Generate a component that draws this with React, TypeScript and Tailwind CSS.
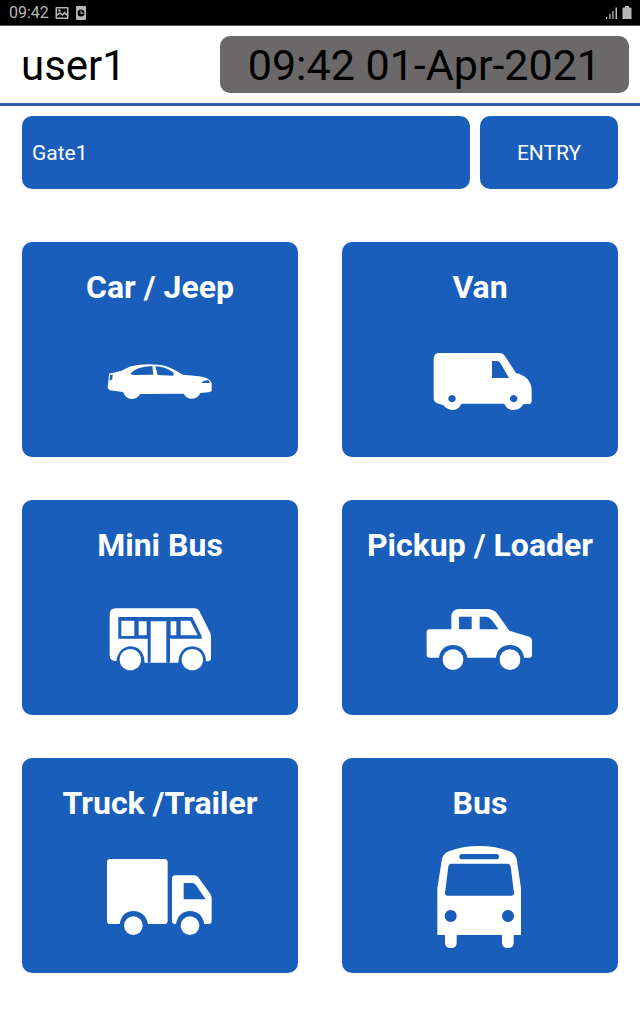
import { useState } from 'react'
import type { ReactNode } from 'react'

interface Vehicle {
  name: string
  viewBox: string
  icon: ReactNode
}

const GATES = ['Gate1', 'Gate2', 'Gate3']

const vehicles: Vehicle[] = [
  {
    name: 'Car / Jeep',
    viewBox: '33 -69 324 324',
    icon: (
      <path
        fillRule="evenodd"
        d="M40 95 L42 73 Q44 69 52 69 L80 62 Q105 46 135 44 Q185 41 212 48 Q228 53 264 74 Q300 76 324 81 Q346 86 350 100 V122 Q348 126 340 127 L316 129 Q309 146 291 146 Q274 146 266 131 L136 132 Q127 147 109 147 Q92 146 84 126 L45 121 Q38 118 38 110Z M107 70 Q122 50 172 48 L175 74 L115 75 Q108 75 107 70Z M181 49 Q212 50 236 68 L235 77 L188 75Z M319 99 Q326 89 341 91 L345 99Z M44 92 L45 76 L53 73 L52 88Z"
      />
    ),
  },
  {
    name: 'Van',
    viewBox: '18 -39 324 324',
    icon: (
      <path
        fillRule="evenodd"
        d="M58 39 H240 Q249 39 254 47 L288 99 Q333 110 335 150 V182 Q335 192 325 192 L309 193 Q301 210 281 210 Q261 210 253 191 H124 Q116 210 96 210 Q81 209 70 196 L50 189 Q41 185 41 175 V56 Q41 39 58 39Z M216 63 H230 Q237 63 241 69 L267 114 H216Z M96 165 a11 11 0 1 0 .1 0Z M281 165 a11 11 0 1 0 .1 0Z"
      />
    ),
  },
  {
    name: 'Mini Bus',
    viewBox: '33 -30 324 324',
    icon: (
      <>
        <path
          fillRule="evenodd"
          d="M62 40 H300 Q309 40 313 48 L345 112 Q348 118 348 126 V190 Q348 199 338 199 H333 Q330 156 292 154 Q253 156 250 203 H149 Q146 156 106 154 Q72 156 64 198 Q44 198 44 180 V59 Q44 40 62 40Z M70 66 V131 H158 V204 H167 V79 H214 V204 H225 V131 H320 V124 L292 66Z"
        />
        <path d="M79 77 H118 V123 H79Z M131 79 H155 V121 H131Z M227 79 H244 V121 H227Z M257 77 H286 L308 121 H257Z" />
        <circle cx="106" cy="194" r="32" />
        <circle cx="292" cy="194" r="32" />
      </>
    ),
  },
  {
    name: 'Pickup / Loader',
    viewBox: '33 -30 324 324',
    icon: (
      <>
        <path
          fillRule="evenodd"
          d="M45 103 H109 V66 Q109 42 134 42 H215 Q236 42 247 56 L283 107 L343 125 Q351 128 351 136 V180 Q351 188 343 188 H327 Q322 152 285 150 Q247 152 243 188 H157 Q151 152 114 150 Q77 152 72 188 H44 Q35 188 35 179 V113 Q35 103 45 103Z M132 65 V103 H170 V65Z M194 65 V103 H251 L230 75 Q222 65 211 65Z"
        />
        <circle cx="114" cy="194" r="31" />
        <circle cx="285" cy="194" r="31" />
      </>
    ),
  },
  {
    name: 'Truck /Trailer',
    viewBox: '33 -6 324 324',
    icon: (
      <>
        <path d="M46 42 H208 Q218 42 218 52 V227 Q218 237 208 237 H159 Q151 199 115 198 Q80 199 74 237 H46 Q36 237 36 227 V52 Q36 42 46 42Z" />
        <path
          fillRule="evenodd"
          d="M241 91 H297 Q306 91 311 98 L346 147 Q350 153 350 160 V228 Q350 237 341 237 H328 Q321 199 285 198 Q250 199 243 237 H240 Q231 237 231 228 V101 Q231 91 241 91Z M266 114 V163 H332 L303 121 Q299 114 291 114Z"
        />
        <circle cx="115" cy="242" r="28" />
        <circle cx="285" cy="242" r="28" />
      </>
    ),
  },
  {
    name: 'Bus',
    viewBox: '3 24 324 324',
    icon: (
      <path
        fillRule="evenodd"
        d="M50 78 Q52 57 72 49 Q112 33 162 33 Q213 33 254 49 Q273 57 276 78 L288 160 V300 H266 V323 Q266 339 249 339 Q231 339 231 323 V300 H95 V323 Q95 339 78 339 Q60 339 60 323 V300 H37 V160Z M111 57 Q103 57 103 65 Q103 73 111 73 H214 Q222 73 222 65 Q222 57 214 57Z M80 86 Q71 86 70 95 L60 174 Q60 182 68 182 H260 Q268 182 267 174 L257 95 Q256 86 247 86Z M77 225 a18 18 0 1 0 .1 0Z M249 225 a18 18 0 1 0 .1 0Z"
      />
    ),
  },
]

function StatusBar() {
  return (
    <div className="flex h-[26px] items-center justify-between border-b border-[#555555] bg-black pt-px pr-2 pl-[9px] text-[#b8b8b8]">
      <div className="flex items-center gap-1.5">
        <span className="text-base leading-6">09:42</span>
        <svg viewBox="0 0 14 14" className="h-[14px] w-[14px]" fill="currentColor" aria-hidden="true">
          <path fillRule="evenodd" d="M1.500 1H12.500Q13.500 1 13.500 2V12Q13.500 13 12.500 13H1.500Q.5 13 .5 12V2Q.5 1 1.500 1Z M2 2.500V11.500H12V2.500Z" />
          <path d="M2 10V8L5 6L7.500 8L9.500 5.500L12 8V10L9.500 8L7.500 10L5 8Z" />
          <circle cx="4.500" cy="4.500" r="1.200" />
        </svg>
        <svg viewBox="0 0 12 14" className="h-[14px] w-3" fill="currentColor" aria-hidden="true">
          <path fillRule="evenodd" d="M2 0H10Q11 0 11 1V13Q11 14 10 14H2Q1 14 1 13V1Q1 0 2 0Z M6 3.500A3.500 3.500 0 1 0 6 10.500A3.500 3.500 0 1 0 6 3.500Z" />
          <path d="M5.500 4.500H6.500V6.500H8.500V7.800H5.500Z" />
        </svg>
      </div>
      <div className="flex items-center gap-1">
        <svg viewBox="0 0 13 14" className="h-[14px] w-[13px]" fill="currentColor" aria-hidden="true">
          <path d="M1 11H2.300V13H1Z M4.300 8H5.600V13H4.300Z M7.300 5H8.600V13H7.300Z M10.500 1.500H12V13H10.500Z" />
        </svg>
        <svg viewBox="0 0 10 14" className="h-[14px] w-[10px]" fill="currentColor" aria-hidden="true">
          <path d="M3 0H7V1.500H8.500Q9.500 1.500 9.500 2.500V13H.5V2.500Q.5 1.500 1.500 1.500H3Z" />
        </svg>
      </div>
    </div>
  )
}

export default function App() {
  const [gate, setGate] = useState(GATES[0])
  const [direction, setDirection] = useState('ENTRY')

  return (
    <div className="min-h-screen bg-white font-['Roboto',sans-serif]">
      <StatusBar />

      {/* Header */}
      <header className="flex items-center justify-between border-b-3 border-[#2f5ea8] py-[10px] pr-[11px] pl-[21px] leading-[55px] text-black">
        <h1 className="pt-0.5 text-[42px]">user1</h1>
        <time
          dateTime="2021-04-01T09:42"
          className="rounded-[10px] bg-[#6b6869] px-7 pt-0.5 text-center text-[43px] whitespace-nowrap"
        >
          09:42 01-Apr-2021
        </time>
      </header>

      <main className="px-[22px] pt-[10px] pb-[52px]">
        {/* Gate and direction */}
        <div className="flex h-[73px] gap-[10px] text-[21px] text-white">
          <select
            aria-label="Gate"
            value={gate}
            onChange={(e) => setGate(e.target.value)}
            className="min-w-0 flex-1 appearance-none rounded-[10px] bg-[#185eba] px-[10px] pt-0.5"
          >
            {GATES.map((g) => (
              <option key={g}>{g}</option>
            ))}
          </select>
          <button
            onClick={() => setDirection(direction === 'ENTRY' ? 'EXIT' : 'ENTRY')}
            className="w-[138px] rounded-[10px] bg-[#185eba] pt-0.5"
          >
            {direction}
          </button>
        </div>

        {/* Vehicle types */}
        <div className="mt-[53px] grid grid-cols-2 gap-x-11 gap-y-[43px]">
          {vehicles.map((vehicle) => (
            <button
              key={vehicle.name}
              className="flex flex-col items-center gap-5 rounded-[10px] bg-[#185eba] pt-[25px] pb-[22px] text-white"
            >
              <span className="text-[32px] leading-10 font-bold whitespace-nowrap">{vehicle.name}</span>
              <svg viewBox={vehicle.viewBox} className="h-[108px] w-[108px]" fill="currentColor" aria-hidden="true">
                {vehicle.icon}
              </svg>
            </button>
          ))}
        </div>
      </main>
    </div>
  )
}
